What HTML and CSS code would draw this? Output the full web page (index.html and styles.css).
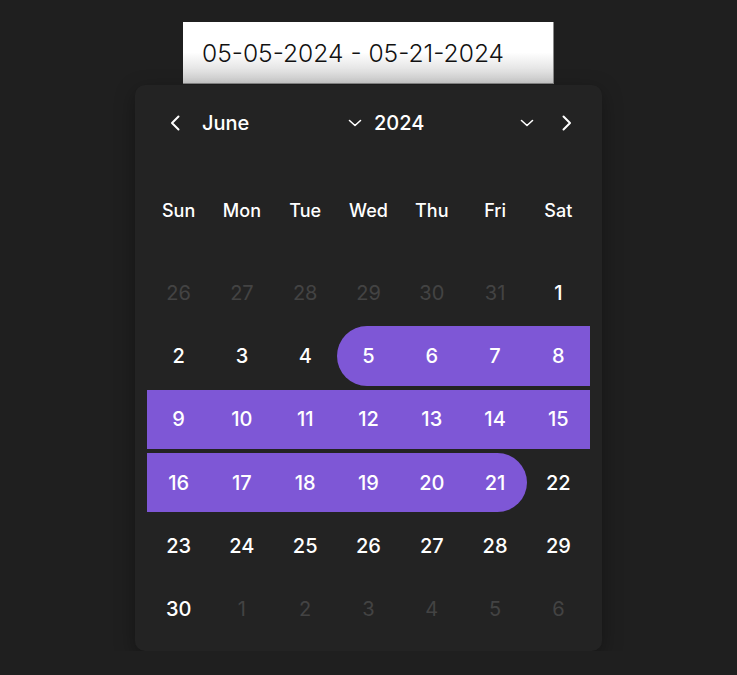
FILE: index.html
```html
<!DOCTYPE html>
<html>
<head>
    <meta charset="UTF-8">
    <title>Date range picker</title>
    <link rel="stylesheet" href="styles.css">
</head>
<body>
    <div class="picker">
        <input class="range-input" type="text" value="05-05-2024 - 05-21-2024" readonly>

        <div class="calendar">
            <div class="cal-header">
                <button class="nav-btn" aria-label="Previous month">
                    <svg width="10" height="16" viewBox="0 0 10 16"><path d="M8.5 1.5 2 8l6.5 6.5" fill="none" stroke="#fff" stroke-width="2" stroke-linecap="round" stroke-linejoin="round"/></svg>
                </button>
                <div class="select month-select">
                    <span>June</span>
                    <svg width="14" height="8" viewBox="0 0 14 8"><path d="M1.5 1.5 7 6.5l5.5-5" fill="none" stroke="#fff" stroke-width="1.6" stroke-linecap="round" stroke-linejoin="round"/></svg>
                </div>
                <div class="select year-select">
                    <span>2024</span>
                    <svg width="14" height="8" viewBox="0 0 14 8"><path d="M1.5 1.5 7 6.5l5.5-5" fill="none" stroke="#fff" stroke-width="1.6" stroke-linecap="round" stroke-linejoin="round"/></svg>
                </div>
                <button class="nav-btn" aria-label="Next month">
                    <svg width="10" height="16" viewBox="0 0 10 16"><path d="M1.5 1.5 8 8l-6.5 6.5" fill="none" stroke="#fff" stroke-width="2" stroke-linecap="round" stroke-linejoin="round"/></svg>
                </button>
            </div>

            <div class="weekdays">
                <span>Sun</span><span>Mon</span><span>Tue</span><span>Wed</span><span>Thu</span><span>Fri</span><span>Sat</span>
            </div>

            <div class="days">
                <span class="day muted">26</span>
                <span class="day muted">27</span>
                <span class="day muted">28</span>
                <span class="day muted">29</span>
                <span class="day muted">30</span>
                <span class="day muted">31</span>
                <span class="day">1</span>

                <span class="day">2</span>
                <span class="day">3</span>
                <span class="day">4</span>
                <span class="day in-range range-start">5</span>
                <span class="day in-range">6</span>
                <span class="day in-range">7</span>
                <span class="day in-range">8</span>

                <span class="day in-range">9</span>
                <span class="day in-range">10</span>
                <span class="day in-range">11</span>
                <span class="day in-range">12</span>
                <span class="day in-range">13</span>
                <span class="day in-range">14</span>
                <span class="day in-range">15</span>

                <span class="day in-range">16</span>
                <span class="day in-range">17</span>
                <span class="day in-range">18</span>
                <span class="day in-range">19</span>
                <span class="day in-range">20</span>
                <span class="day in-range range-end">21</span>
                <span class="day">22</span>

                <span class="day">23</span>
                <span class="day">24</span>
                <span class="day">25</span>
                <span class="day">26</span>
                <span class="day">27</span>
                <span class="day">28</span>
                <span class="day">29</span>

                <span class="day">30</span>
                <span class="day muted">1</span>
                <span class="day muted">2</span>
                <span class="day muted">3</span>
                <span class="day muted">4</span>
                <span class="day muted">5</span>
                <span class="day muted">6</span>
            </div>
        </div>
    </div>
</body>
</html>
```

FILE: styles.css
```css
body {
    margin: 0;
    background: #1f1f1f;
    font-family: Inter, "Noto Sans", sans-serif;
    color: #fff;
}
.picker {
    display: flex;
    flex-direction: column;
    align-items: center;
    padding-top: 22px;
}
.range-input {
    width: 371px;
    height: 62px;
    box-sizing: border-box;
    padding: 0 0 0 19px;
    border: none;
    border-right: 1px solid #8a8a8a;
    border-bottom: 1px solid #8a8a8a;
    background: linear-gradient(to bottom, #fff 50%, #cfcfcf 100%);
    font-family: Inter, sans-serif;
    font-weight: 300;
    font-size: 24.6px;
    color: #111;
    outline: none;
}
.calendar {
    width: 467px;
    box-sizing: border-box;
    margin-top: 1px;
    padding: 20px 12px 10px;
    background: #232323;
    border-radius: 10px;
    box-shadow: 0 6px 20px rgba(0,0,0,0.35);
}
.cal-header {
    display: flex;
    align-items: center;
    height: 36px;
    padding-left: 16px;
}
.nav-btn {
    width: 24px;
    height: 36px;
    padding: 0;
    background: none;
    border: none;
    display: flex;
    align-items: center;
    justify-content: center;
    cursor: pointer;
}
.select {
    display: flex;
    align-items: center;
    justify-content: space-between;
    width: 160px;
    font-size: 20px;
    font-weight: 500;
}
.month-select {
    margin-left: 15px;
}
.year-select {
    margin-left: 12px;
    margin-right: 21px;
}
.weekdays {
    display: grid;
    grid-template-columns: repeat(7, 1fr);
    height: 36px;
    margin-top: 51px;
    align-items: center;
    text-align: center;
    font-size: 18px;
    font-weight: 500;
}
.days {
    display: grid;
    grid-template-columns: repeat(7, 1fr);
    grid-auto-rows: 63.3px;
    margin-top: 33px;
}
.day {
    display: flex;
    align-items: center;
    justify-content: center;
    margin: 2px 0;
    font-size: 20px;
    font-weight: 500;
}
.muted {
    color: #434343;
    font-weight: 400;
}
.in-range {
    background: #7e57d6;
}
.range-start {
    border-radius: 30px 0 0 30px;
}
.range-end {
    border-radius: 0 30px 30px 0;
}
```
